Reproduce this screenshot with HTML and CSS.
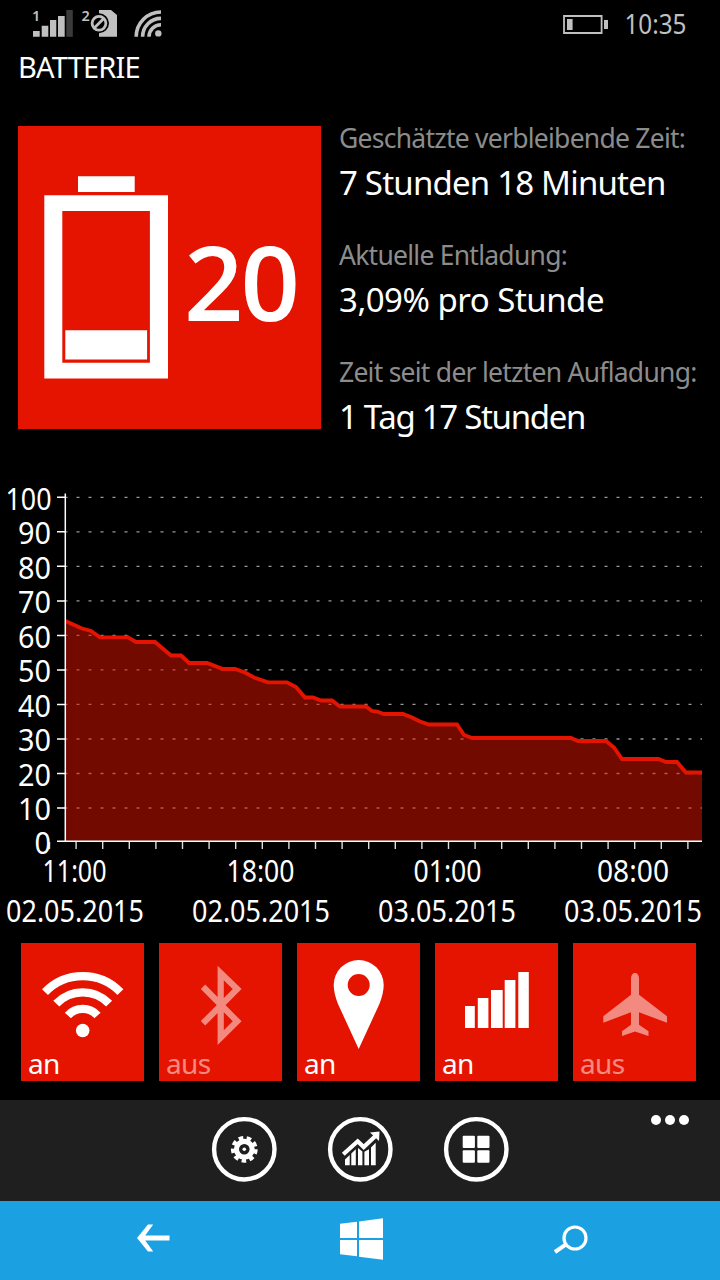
FILE: index.html
```html
<!DOCTYPE html>
<html lang="de">

<head>
    <meta charset="UTF-8">
    <meta name="viewport" content="width=device-width, initial-scale=1.0">
    <title>Batterie</title>
    <link rel="stylesheet" href="styles.css">
</head>

<body>
    <header class="status-bar">
        <svg class="status-icons" width="132" height="46" viewBox="32 0 132 46">
            <text class="sim-number" x="32" y="21">1</text>
            <path d="M33 31h6.7v5.8H33zM41.7 25.7h6.6v11.1h-6.6zM50 20h6.3v16.8H50zM58 16h6.7v20.8H58z"/>
            <path class="dim" d="M66.3 10h6.5v26.8h-6.5z"/>
            <text class="sim-number" x="81.5" y="21">2</text>
            <path d="M99 10h12l6 5v21.8H99v-3.5a10 10 0 0 0 0-20z"/>
            <circle class="line" cx="99" cy="23.3" r="6.9" stroke-width="2.8"/>
            <path class="line" d="M94.5 27.8l9-9" stroke-width="2.8"/>
            <circle cx="158.3" cy="33.4" r="3.2"/>
            <path class="line" stroke-width="3.6" d="M161 12A24.8 24.8 0 0 0 136.2 36.8M161 18.4A18.4 18.4 0 0 0 142.6 36.8M161 24.8A12 12 0 0 0 149 36.8"/>
        </svg>
        <svg class="battery-small" width="46" height="46" viewBox="563 0 46 46">
            <path class="line" stroke-width="1.8" d="M564 16h37.6v17H564z"/>
            <path d="M567 19h5.6v11H567zM604 20h4v9h-4z"/>
        </svg>
        <svg class="clock" width="64" height="46" viewBox="0 0 64 46">
            <text x="0.5" y="33.5" textLength="62" lengthAdjust="spacingAndGlyphs">10:35</text>
        </svg>
    </header>

    <main>
        <h1>BATTERIE</h1>

        <section class="overview">
            <div class="charge">
                <svg width="168" height="303" viewBox="0 0 168 303">
                    <path d="M60 50.3h56.7V66H60z"/>
                    <path fill-rule="evenodd" d="M26.3 69.2H150v183.2H26.3zM44.3 85v151.8h87.6V85z"/>
                    <path d="M47.3 204.2h81.8v29.4H47.3z"/>
                </svg>
                <span class="charge-value">20</span>
            </div>
            <dl class="info">
                <div>
                    <dt>Geschätzte verbleibende Zeit:</dt>
                    <dd>7 Stunden 18 Minuten</dd>
                </div>
                <div>
                    <dt>Aktuelle Entladung:</dt>
                    <dd class="wide">3,09% pro Stunde</dd>
                </div>
                <div>
                    <dt>Zeit seit der letzten Aufladung:</dt>
                    <dd class="tight">1 Tag 17 Stunden</dd>
                </div>
            </dl>
        </section>

        <svg class="chart" width="720" height="463" viewBox="0 480 720 463">
            <path class="grid" d="M64.5 497.3H702M64.5 531.8H702M64.5 566.3H702M64.5 600.9H702M64.5 635.4H702M64.5 669.9H702M64.5 704.4H702M64.5 739H702M64.5 773.5H702M64.5 808H702"/>
            <path class="area" d="M65.5 841V621L72 624L82 628.5L91 631L100 637.3H128L136 642H155L171 655.5H181L189 663H207L223 669H235L245 672.5L254 677.5L268 682.3H287L296 687L305 697.5H313L321 700.5H332L340 706.5H366L372 711L377 711.5L384 714H403L412 717.5L420 721.5L429 724.5H457L464 735L472 738H571L578 741H606L614 747.5L622 759H658.5L666 762H677L686 772.5H702V841z"/>
            <path class="curve" d="M65.5 621L72 624L82 628.5L91 631L100 637.3H128L136 642H155L171 655.5H181L189 663H207L223 669H235L245 672.5L254 677.5L268 682.3H287L296 687L305 697.5H313L321 700.5H332L340 706.5H366L372 711L377 711.5L384 714H403L412 717.5L420 721.5L429 724.5H457L464 735L472 738H571L578 741H606L614 747.5L622 759H658.5L666 762H677L686 772.5H702"/>
            <path class="axis" d="M65.3 493.5V842M57 841.2H702"/>
            <path class="axis" d="M57 497.3h8M57 531.8h8M57 566.3h8M57 600.9h8M57 635.4h8M57 669.9h8M57 704.4h8M57 739h8M57 773.5h8M57 808h8"/>
            <path class="hours" d="M48.8 845.5H690"/>
            <g class="y-labels">
                <text x="51.5" y="509.5" textLength="46" lengthAdjust="spacingAndGlyphs">100</text>
                <text x="51" y="544.4" textLength="33" lengthAdjust="spacingAndGlyphs">90</text>
                <text x="51" y="578.8" textLength="33" lengthAdjust="spacingAndGlyphs">80</text>
                <text x="51" y="613.3" textLength="33" lengthAdjust="spacingAndGlyphs">70</text>
                <text x="51" y="647.7" textLength="33" lengthAdjust="spacingAndGlyphs">60</text>
                <text x="51" y="682.2" textLength="33" lengthAdjust="spacingAndGlyphs">50</text>
                <text x="51" y="716.6" textLength="33" lengthAdjust="spacingAndGlyphs">40</text>
                <text x="51" y="751.1" textLength="33" lengthAdjust="spacingAndGlyphs">30</text>
                <text x="51" y="785.5" textLength="33" lengthAdjust="spacingAndGlyphs">20</text>
                <text x="51" y="820" textLength="33" lengthAdjust="spacingAndGlyphs">10</text>
                <text x="51" y="854.4" textLength="16.5" lengthAdjust="spacingAndGlyphs">0</text>
            </g>
            <g class="x-labels">
                <text x="74.5" y="881.7" textLength="64" lengthAdjust="spacingAndGlyphs">11:00</text>
                <text x="75" y="921.6" textLength="138" lengthAdjust="spacingAndGlyphs">02.05.2015</text>
                <text x="260.5" y="881.7" textLength="68" lengthAdjust="spacingAndGlyphs">18:00</text>
                <text x="261" y="921.6" textLength="138" lengthAdjust="spacingAndGlyphs">02.05.2015</text>
                <text x="447.5" y="881.7" textLength="68" lengthAdjust="spacingAndGlyphs">01:00</text>
                <text x="447" y="921.6" textLength="138" lengthAdjust="spacingAndGlyphs">03.05.2015</text>
                <text x="633" y="881.7" textLength="72" lengthAdjust="spacingAndGlyphs">08:00</text>
                <text x="633" y="921.6" textLength="138" lengthAdjust="spacingAndGlyphs">03.05.2015</text>
            </g>
        </svg>

        <section class="toggles">
            <div class="toggle">
                <svg viewBox="0 0 123 102">
                    <path class="wave" d="M24 49.2A52.4 52.4 0 0 1 99.4 49.2M35.3 60.7A36.5 36.5 0 0 1 88.1 60.7M46.9 72.5A20 20 0 0 1 76.5 72.5"/>
                    <circle cx="61.7" cy="87.5" r="6.8"/>
                </svg>
                <span>an</span>
            </div>
            <div class="toggle off">
                <svg viewBox="0 0 123 102">
                    <path class="rune" d="M44 43.8L78.2 78.3L61.7 94.6V30L78.2 46L44 80.3"/>
                </svg>
                <span>aus</span>
            </div>
            <div class="toggle">
                <svg viewBox="0 0 123 102">
                    <path fill-rule="evenodd" d="M61.7 106L41 61Q36.7 50 36.7 42A25 25 0 0 1 86.7 42Q86.7 50 82.4 61zM61.7 31A11 11 0 1 0 61.7 53A11 11 0 1 0 61.7 31z"/>
                </svg>
                <span>an</span>
            </div>
            <div class="toggle">
                <svg viewBox="0 0 123 102">
                    <path d="M30 63h9.8v22H30zM42.8 55h10.6v30H42.8zM56 47h11.7v38H56zM69.7 37h10.7v48H69.7zM83.3 29h10.5v56H83.3z"/>
                </svg>
                <span>an</span>
            </div>
            <div class="toggle off">
                <svg viewBox="0 0 123 102">
                    <path d="M58 35.5C58 32 60 30 62 30S66 32 66 35.5V51.7L94 73.3V79.7L66 69.3V81.7L75.5 88.3V93L62 88.5L49 93V88.3L58 81.7V69.3L30.3 79.7V73.3L58 51.7z"/>
                </svg>
                <span>aus</span>
            </div>
        </section>
    </main>

    <div class="app-bar">
        <div class="app-buttons">
            <svg class="round" viewBox="0 0 65 65">
                <circle class="ring" cx="32.3" cy="32.3" r="30.2"/>
                <circle class="gear-body" cx="32.3" cy="32.3" r="7.9"/>
                <circle class="gear-teeth" cx="32.3" cy="32.3" r="11.5"/>
                <circle cx="32.3" cy="32.3" r="1.8"/>
            </svg>
            <svg class="round" viewBox="0 0 65 65">
                <circle class="ring" cx="32.3" cy="32.3" r="30.2"/>
                <path d="M17 42.5l4.7-4.5v10.3H17zM23.3 36.5l4.5-4.3v16.1h-4.5zM30 31l4.4 3.6v13.7H30zM36.4 34.8l4.6-2.6v16.1h-4.6zM43 30.5l4.7-4.7v22.5H43z"/>
                <path class="trend" d="M15.3 37.3L29.7 24.3L35.7 30L48 18.5"/>
                <path d="M42 15.5L51.5 14.5L51 24z"/>
            </svg>
            <svg class="round" viewBox="0 0 65 65">
                <circle class="ring" cx="32.3" cy="32.3" r="30.2"/>
                <rect x="18.7" y="18.7" width="12.2" height="12.2" rx="1"/>
                <rect x="33.3" y="18.7" width="12.2" height="12.2" rx="1"/>
                <rect x="18.7" y="33.3" width="12.2" height="12.4" rx="1"/>
                <rect x="33.3" y="33.3" width="12.2" height="12.4" rx="1"/>
            </svg>
        </div>
        <div class="more"><i></i><i></i><i></i></div>
    </div>

    <nav class="nav-bar">
        <svg class="back" width="33" height="28" viewBox="0 0 33 28">
            <path d="M0 14L11 .5h5.2L8.2 11.5H32.5v5H8.2l8 11H11z"/>
        </svg>
        <svg width="43" height="42" viewBox="0 0 43 42">
            <path d="M0 5.8L17 3.8V20H0zM19 3.4L43 .2V20H19zM0 22h17v16.2L0 36.2zM19 22h24v19.8L19 38.8z"/>
        </svg>
        <svg width="34" height="28" viewBox="0 0 34 28">
            <circle class="lens" cx="21" cy="13" r="11"/>
            <path class="lens handle" d="M12 19.3L1 27"/>
        </svg>
    </nav>
</body>

</html>
```

FILE: styles.css
```css
* {
    margin: 0;
    padding: 0;
    box-sizing: border-box;
}

body {
    width: 720px;
    height: 1280px;
    overflow: hidden;
    font-family: 'Noto Sans', 'Open Sans', sans-serif;
    color: #fff;
    background-color: #000;
}

svg {
    display: block;
    flex: none;
    overflow: visible;
    fill: #fff;
}

/* Status bar */
.status-bar {
    display: flex;
    height: 46px;
    padding: 0 32px;
}

.status-bar svg {
    fill: #c0c0c0;
}

.status-bar .line {
    fill: none;
    stroke: #c0c0c0;
}

.status-bar .dim {
    fill: #3a3a3a;
}

.sim-number {
    font-size: 14.5px;
    font-weight: 600;
}

.battery-small {
    margin-left: auto;
}

.clock {
    margin-left: 15px;
    font-size: 27px;
}

h1 {
    padding: 1px 0 0 18px;
    font-size: 29px;
    font-weight: 400;
    line-height: 40px;
    letter-spacing: -0.8px;
}

/* Charge tile and estimates */
.overview {
    display: flex;
    height: 393px;
    padding: 39px 0 0 18px;
}

.charge {
    display: flex;
    width: 303px;
    height: 303px;
    background-color: #e51400;
}

.charge-value {
    font-family: 'Open Sans', sans-serif;
    font-size: 104px;
    font-weight: 600;
    line-height: 309px;
    letter-spacing: -3px;
    text-indent: -2px;
}

.info {
    display: flex;
    flex-direction: column;
    gap: 29px;
    margin: -6px 0 0 18px;
    white-space: nowrap;
}

.info dt {
    font-size: 26.5px;
    line-height: 37px;
    letter-spacing: -0.75px;
    color: #8c8c8c;
}

.info dd {
    font-size: 33px;
    line-height: 51px;
    letter-spacing: -0.8px;
}

.info dd.tight {
    letter-spacing: -1.3px;
}

.info dd.wide {
    letter-spacing: -0.5px;
}

/* Chart */
.chart .grid {
    fill: none;
    stroke: #999;
    stroke-width: 1.3;
    stroke-dasharray: 3 9;
}

.chart .area {
    fill: #e51400;
    fill-opacity: 0.5;
}

.chart .curve {
    fill: none;
    stroke: #e51400;
    stroke-width: 3.8;
}

.chart .axis {
    fill: none;
    stroke: #fff;
    stroke-width: 1.5;
}

.chart .hours {
    stroke: #ddd;
    stroke-width: 7;
    stroke-dasharray: 1.4 25.2;
}

.chart text {
    font-size: 30px;
}

.y-labels {
    text-anchor: end;
}

.x-labels {
    text-anchor: middle;
}

/* Toggle tiles */
.toggles {
    display: flex;
    gap: 15px;
    padding-left: 21px;
}

.toggle {
    width: 123px;
    height: 138px;
    background-color: #e51400;
}

.toggle svg {
    width: 123px;
    height: 102px;
}

.toggle span {
    display: block;
    padding-left: 7px;
    font-size: 28px;
    line-height: 36px;
    letter-spacing: -0.6px;
}

.toggle.off svg,
.toggle.off span {
    opacity: 0.5;
}

.wave {
    fill: none;
    stroke: #fff;
    stroke-width: 8.3;
}

.rune {
    fill: none;
    stroke: #fff;
    stroke-width: 6.2;
}

/* App bar */
.app-bar {
    display: grid;
    grid-template-columns: 1fr auto 1fr;
    height: 101px;
    margin-top: 19px;
    background-color: #1f1f1f;
}

.app-buttons {
    display: flex;
    grid-column: 2;
    gap: 51px;
    padding-top: 17px;
}

.round {
    width: 65px;
    height: 65px;
}

.ring {
    fill: none;
    stroke: #fff;
    stroke-width: 4.4;
}

.gear-body {
    fill: none;
    stroke: #fff;
    stroke-width: 5.2;
}

.gear-teeth {
    fill: none;
    stroke: #fff;
    stroke-width: 3.8;
    stroke-dasharray: 4.6 3.43;
}

.trend {
    fill: none;
    stroke: #fff;
    stroke-width: 4.2;
}

.more {
    display: flex;
    gap: 4px;
    justify-self: end;
    padding: 15px 31px 0 0;
}

.more i {
    width: 10px;
    height: 10px;
    border-radius: 50%;
    background-color: #fff;
}

/* Navigation bar */
.nav-bar {
    display: flex;
    justify-content: space-between;
    align-items: center;
    height: 79px;
    padding: 0 132px 4px 136.5px;
    background-color: #1ba1e2;
}

.back {
    margin-bottom: 2px;
}

.lens {
    fill: none;
    stroke: #fff;
    stroke-width: 3.2;
}

.handle {
    stroke-width: 4;
}
```
